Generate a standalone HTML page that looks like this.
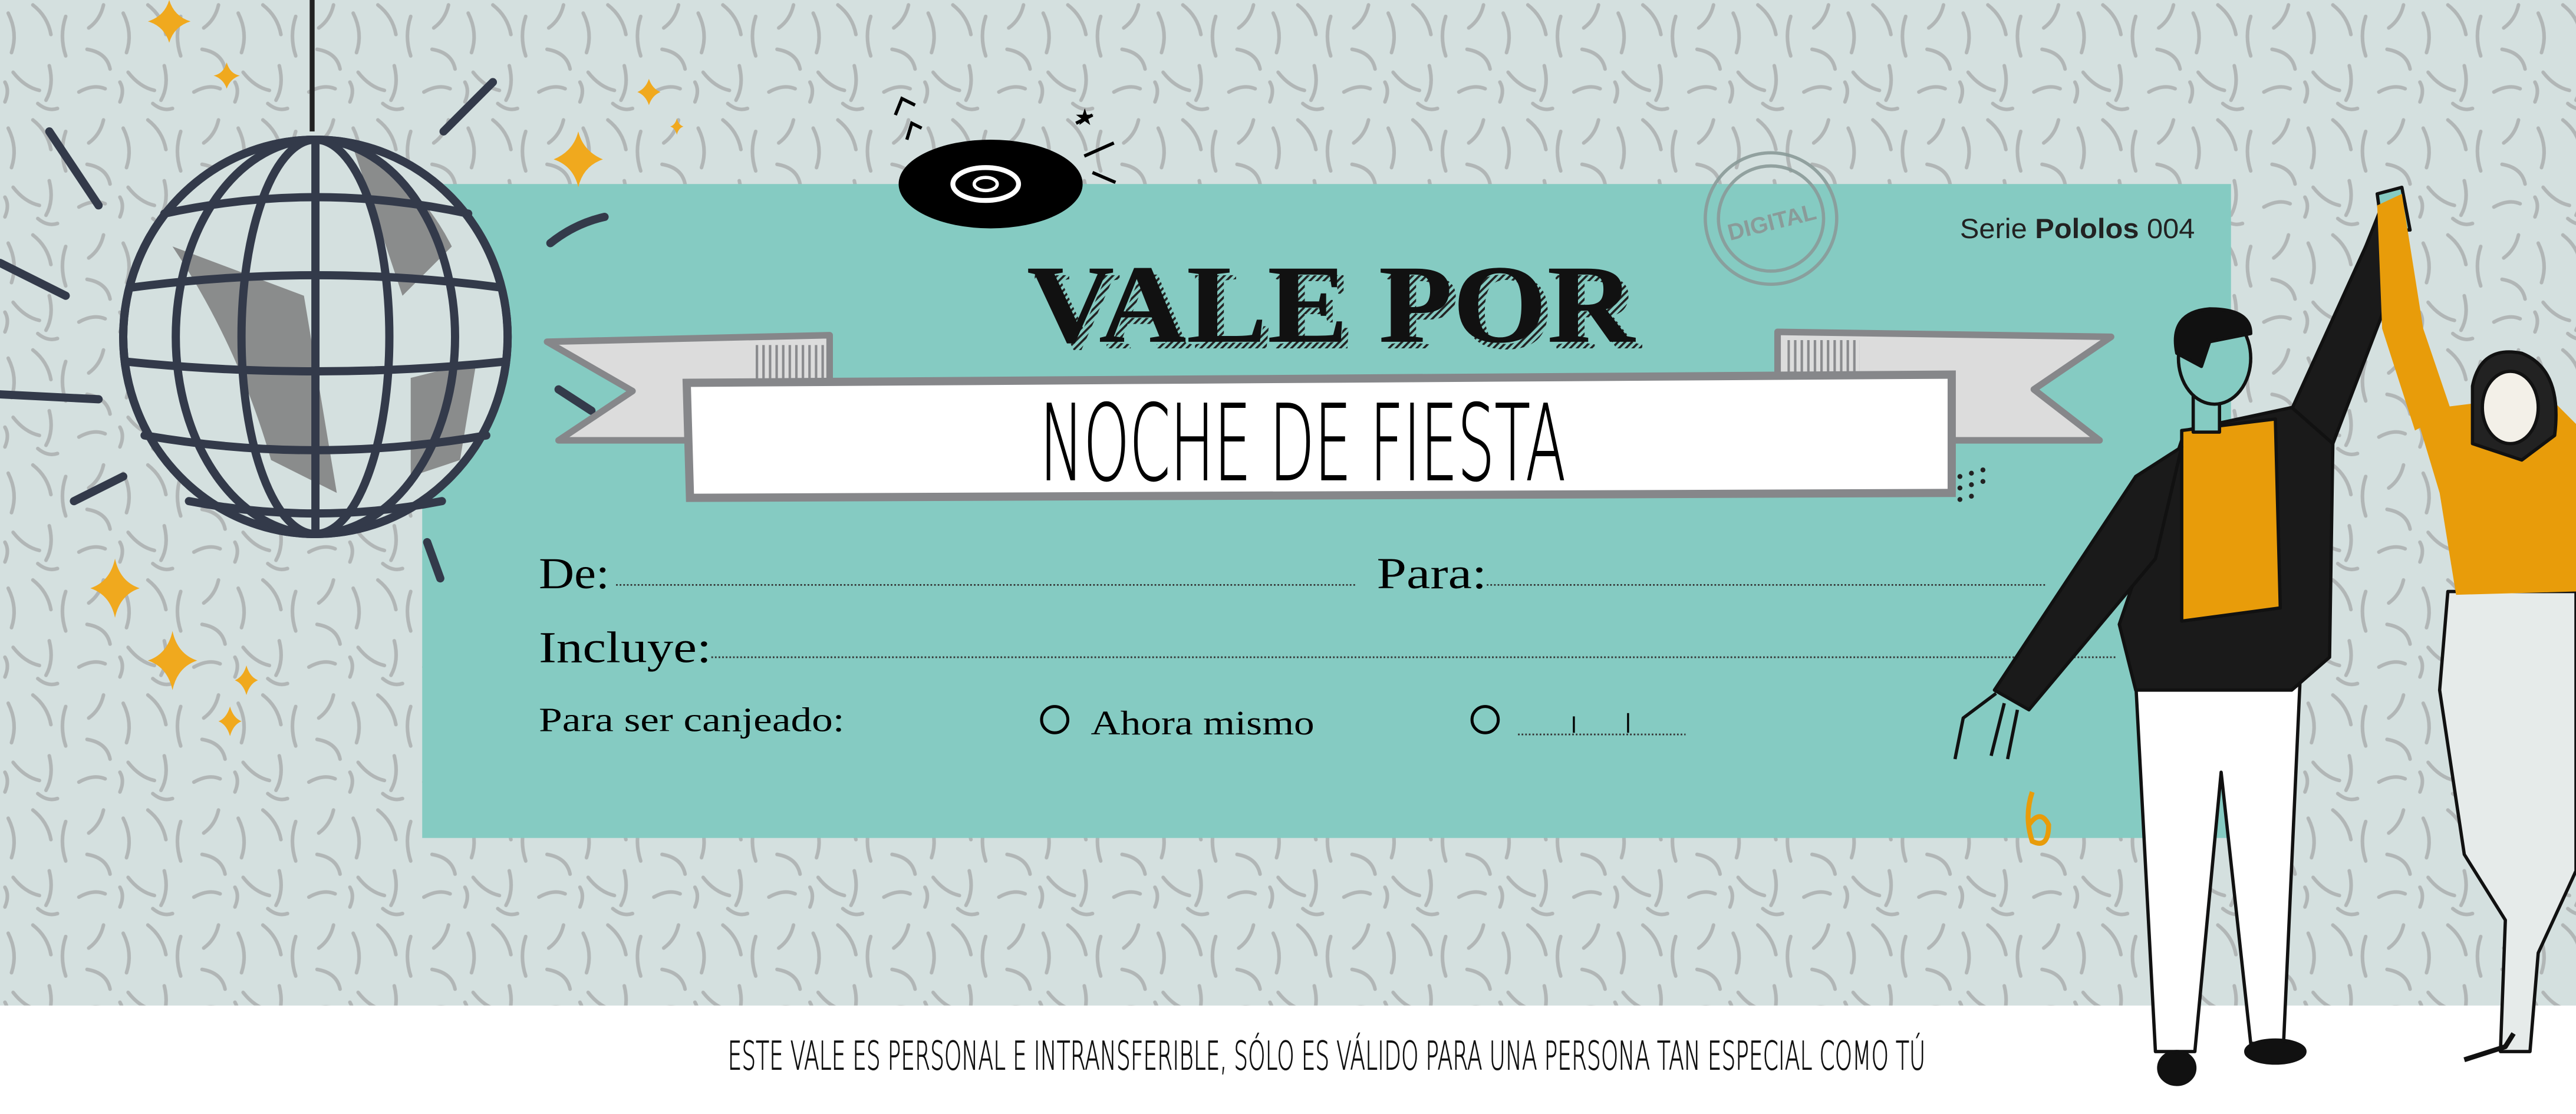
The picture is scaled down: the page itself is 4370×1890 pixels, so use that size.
<!DOCTYPE html>
<html><head><meta charset="utf-8"><style>html,body{margin:0;padding:0;background:#d4e0df;overflow:hidden}svg{display:block}</style></head><body>
<svg width="4370" height="1890" viewBox="0 0 1568 678" preserveAspectRatio="none" xmlns="http://www.w3.org/2000/svg">
<defs>
<pattern id="sw" width="70" height="70" patternUnits="userSpaceOnUse">
<g fill="none" stroke="#b1b6b6" stroke-width="2.2" stroke-linecap="round">
<path d="M5,8 q6,12 2,24"/><path d="M20,3 q9,7 11,18"/><path d="M40,10 q-4,12 0,24"/><path d="M53,30 q12,2 14,12"/><path d="M8,44 q7,9 16,11"/><path d="M30,40 q3,12 -2,21"/><path d="M48,56 q9,-5 16,-2"/><path d="M23,63 q6,5 12,3"/><path d="M63,3 q-2,9 -9,14"/><path d="M3,62 q3,-7 0,-12"/>
</g></pattern>
<pattern id="hatch" width="3" height="3" patternUnits="userSpaceOnUse" patternTransform="rotate(45)"><rect width="1.3" height="3" fill="#222"/></pattern>
<pattern id="vs" width="4" height="4" patternUnits="userSpaceOnUse"><rect width="1.5" height="4" fill="#8a8b8e"/></pattern>
</defs>
<rect width="1568" height="678" fill="#d4e0df"/>
<rect width="1568" height="678" fill="url(#sw)"/>
<rect x="0" y="612" width="1568" height="66" fill="#fff"/>
<rect x="257" y="112" width="1101" height="398" fill="#85cbc2"/>
<line x1="190" y1="0" x2="190" y2="80" stroke="#222" stroke-width="3"/>
<g stroke="#333a4a" stroke-width="5" fill="none" stroke-linecap="round">
<ellipse cx="192" cy="205" rx="117" ry="120" fill="#d4e0df"/>
<path d="M105,150 q40,60 60,130 l40,20 l-20,-120 z" fill="#8a8c8c" stroke="none"/>
<path d="M215,90 q40,20 60,60 l-30,30 z" fill="#8a8c8c" stroke="none"/>
<path d="M250,230 l40,-10 l-10,60 l-30,10 z" fill="#8a8c8c" stroke="none"/>
<ellipse cx="192" cy="205" rx="117" ry="120"/>
<ellipse cx="192" cy="205" rx="85" ry="120"/>
<ellipse cx="192" cy="205" rx="45" ry="120"/>
<line x1="192" y1="85" x2="192" y2="325"/>
<path d="M100,130 q92,-20 185,0"/><path d="M80,175 q112,-15 225,0"/><path d="M76,220 q116,12 232,0"/><path d="M88,265 q104,18 208,0"/><path d="M115,305 q77,15 154,0"/>
<path d="M30,80 L60,125"/><path d="M0,160 L40,180"/><path d="M0,240 L60,243"/><path d="M45,305 L75,290"/><path d="M260,330 L268,352"/><path d="M270,80 L300,50"/><path d="M335,148 q15,-12 33,-16"/><path d="M340,237 L360,250"/>
</g>
<g fill="#f0a91e">
<path d="M103,0 q3,10 13,13 q-10,3 -13,13 q-3,-10 -13,-13 q10,-3 13,-13z"/>
<path d="M138,38 q2,7 8,8 q-6,2 -8,8 q-2,-6 -8,-8 q6,-1 8,-8z"/>
<path d="M352,80 q3,12 15,17 q-12,4 -15,17 q-3,-13 -15,-17 q12,-5 15,-17z"/>
<path d="M395,48 q2,6 7,8 q-5,2 -7,8 q-2,-6 -7,-8 q5,-2 7,-8z"/>
<path d="M412,72 q1,4 4,5 q-3,1 -4,5 q-1,-4 -4,-5 q3,-1 4,-5z"/>
<path d="M70,340 q3,14 15,18 q-12,4 -15,18 q-3,-14 -15,-18 q12,-4 15,-18z"/>
<path d="M105,384 q3,14 15,18 q-12,4 -15,18 q-3,-14 -15,-18 q12,-4 15,-18z"/>
<path d="M150,405 q2,7 7,9 q-5,2 -7,9 q-2,-7 -7,-9 q5,-2 7,-9z"/>
<path d="M140,430 q2,7 7,9 q-5,2 -7,9 q-2,-7 -7,-9 q5,-2 7,-9z"/>
</g>
<ellipse cx="603" cy="112" rx="56" ry="27" fill="#000"/>
<ellipse cx="600" cy="112" rx="20" ry="10" fill="none" stroke="#fff" stroke-width="3"/>
<ellipse cx="600" cy="112" rx="7" ry="4" fill="none" stroke="#fff" stroke-width="2"/>
<g stroke="#000" stroke-width="2" fill="none"><path d="M545,70 l4,-10 l8,4"/><path d="M552,85 l3,-10 l6,3"/><path d="M655,75 l10,-5"/><path d="M660,95 l18,-8"/><path d="M665,105 l14,6"/></g>
<text x="654" y="76" font-size="14" font-family="DejaVu Sans" fill="#000">★</text>
<g stroke="#8a9b99" fill="none" stroke-width="2" opacity="0.9"><circle cx="1078" cy="133" r="40"/><circle cx="1078" cy="133" r="32"/></g>
<text x="1078" y="140" font-size="14" font-weight="bold" font-family="Liberation Sans, sans-serif" fill="#8a9b99" text-anchor="middle" transform="rotate(-14 1078 133)">DIGITAL</text>
<text x="1193" y="145" font-size="17" font-family="Liberation Sans, sans-serif" fill="#222" textLength="143" lengthAdjust="spacingAndGlyphs">Serie <tspan font-weight="bold">Pololos</tspan> 004</text>
<text x="629" y="212" font-size="68" font-weight="bold" font-family="Liberation Serif, serif" textLength="370" lengthAdjust="spacingAndGlyphs" fill="url(#hatch)">VALE POR</text>
<text x="625" y="208" font-size="68" font-weight="bold" font-family="Liberation Serif, serif" textLength="370" lengthAdjust="spacingAndGlyphs" fill="#111">VALE POR</text>
<polygon points="333,208 505,204 505,268 340,268 385,238" fill="#dcdcdc" stroke="#86878a" stroke-width="4" stroke-linejoin="round"/>
<rect x="458" y="210" width="44" height="24" fill="url(#vs)"/>
<polygon points="1082,202 1285,205 1238,237 1278,268 1185,268 1082,262" fill="#dcdcdc" stroke="#86878a" stroke-width="4" stroke-linejoin="round"/>
<rect x="1088" y="207" width="44" height="24" fill="url(#vs)"/>
<polygon points="418,233 1188,228 1188,300 420,303" fill="#fff" stroke="#86878a" stroke-width="5"/>
<text x="633" y="292" font-size="64" font-weight="200" font-family="DejaVu Sans, sans-serif" textLength="320" lengthAdjust="spacingAndGlyphs" fill="#000" stroke="#000" stroke-width="0.6">NOCHE DE FIESTA</text>
<g fill="#222"><circle cx="1193" cy="290" r="1.5"/><circle cx="1200" cy="288" r="1.5"/><circle cx="1207" cy="286" r="1.5"/><circle cx="1193" cy="297" r="1.5"/><circle cx="1200" cy="295" r="1.5"/><circle cx="1207" cy="293" r="1.5"/><circle cx="1193" cy="304" r="1.5"/><circle cx="1200" cy="302" r="1.5"/></g>
<g font-family="Liberation Serif, serif" fill="#000">
<text x="328" y="358" font-size="27" textLength="43" lengthAdjust="spacingAndGlyphs">De:</text>
<text x="838" y="358" font-size="27" textLength="67" lengthAdjust="spacingAndGlyphs">Para:</text>
<text x="328" y="403" font-size="27" textLength="105" lengthAdjust="spacingAndGlyphs">Incluye:</text>
<text x="328" y="445" font-size="21" textLength="186" lengthAdjust="spacingAndGlyphs">Para ser canjeado:</text>
<text x="664" y="447" font-size="21" textLength="136" lengthAdjust="spacingAndGlyphs">Ahora mismo</text>
</g>
<g stroke="#333" stroke-width="1" stroke-dasharray="1 1.2">
<line x1="375" y1="356" x2="826" y2="356"/><line x1="905" y1="356" x2="1245" y2="356"/><line x1="433" y1="400" x2="1288" y2="400"/><line x1="924" y1="447" x2="1026" y2="447"/>
</g>
<g stroke="#000" stroke-width="1.2"><line x1="958" y1="436" x2="958" y2="446"/><line x1="991" y1="434" x2="991" y2="446"/></g>
<g fill="none" stroke="#000" stroke-width="1.8"><circle cx="642" cy="438" r="8"/><circle cx="904" cy="438" r="8"/></g>
<g stroke="#111" stroke-width="2" stroke-linejoin="round">
<polygon points="1300,415 1400,415 1390,635 1370,635 1352,470 1336,640 1312,640" fill="#fff"/>
<ellipse cx="1325" cy="650" rx="11" ry="10" fill="#111"/><ellipse cx="1385" cy="640" rx="18" ry="7" fill="#111"/>
<polygon points="1390,260 1440,150 1450,125 1465,130 1462,160 1420,270" fill="#1a1a1a"/>
<polygon points="1447,118 1462,114 1467,140 1450,140" fill="#85cbc2"/>
<path d="M1330,262 L1395,248 L1420,270 L1418,400 L1395,420 L1300,420 L1290,380 Z" fill="#1a1a1a"/>
<polygon points="1328,262 1385,255 1388,370 1328,378" fill="#e89c0a"/>
<polygon points="1300,290 1328,272 1312,340 1235,432 1214,420" fill="#1a1a1a"/>
<path d="M1215,422 l-20,15 l-5,25 M1220,428 l-8,32 M1228,432 l-6,30" fill="none"/>
<rect x="1335" y="235" width="16" height="28" fill="#85cbc2"/>
<ellipse cx="1348" cy="218" rx="22" ry="28" fill="#85cbc2"/>
<path d="M1325,215 q-5,-25 20,-27 q25,0 25,15 l-25,5 l-5,15 z" fill="#111"/>
</g>
<g stroke="#111" stroke-width="2" stroke-linejoin="round">
<polygon points="1490,360 1568,360 1568,530 1545,580 1540,640 1522,640 1525,560 1500,520 1485,420" fill="#e6ebea"/>
<path d="M1500,645 l25,-8 l5,-8" fill="none" stroke-width="3"/>
<polygon points="1447,125 1462,118 1475,200 1492,250 1470,262 1450,200" fill="#e89c0a" stroke="none"/>
<path d="M1470,250 L1550,240 L1568,258 L1568,360 L1495,362 L1485,300 Z" fill="#e89c0a" stroke="none"/>
<path d="M1505,235 q5,-25 30,-20 q25,10 20,50 l-20,15 l-30,-10 z" fill="#222"/>
<ellipse cx="1528" cy="248" rx="17" ry="22" fill="#f3f0e8"/>
</g>
<path d="M1237,482 q-5,15 0,30 q10,5 10,-10 q-5,-10 -12,0" fill="none" stroke="#e89c0a" stroke-width="3"/>
<text x="443" y="651" font-size="24" font-weight="200" font-family="DejaVu Sans, sans-serif" textLength="729" lengthAdjust="spacingAndGlyphs" fill="#111" stroke="#111" stroke-width="0.4">ESTE VALE ES PERSONAL E INTRANSFERIBLE, SÓLO ES VÁLIDO PARA UNA PERSONA TAN ESPECIAL COMO TÚ</text>
</svg>
</body></html>
